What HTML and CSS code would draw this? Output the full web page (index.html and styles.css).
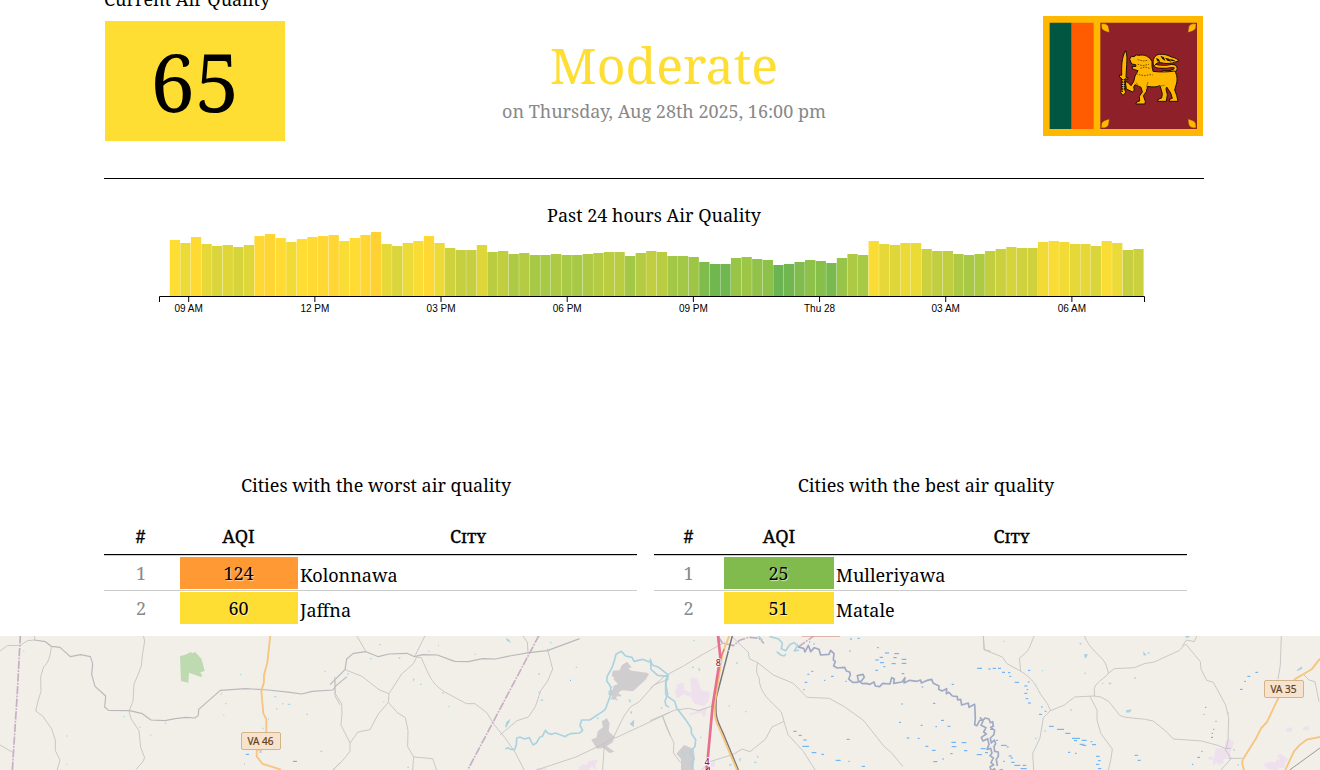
FILE: index.html
```html
<!DOCTYPE html>
<html lang="en">
<head>
<meta charset="utf-8">
<title>Air Quality</title>
<link rel="stylesheet" href="styles.css">
</head>
<body>
<main class="page">
  <section class="current">
    <div class="current-left">
      <div class="current-label">Current Air Quality</div>
      <div class="aqi-box">65</div>
    </div>
    <div class="current-status">
      <div class="level">Moderate</div>
      <div class="date">on Thursday, Aug 28th 2025, 16:00 pm</div>
    </div>
    <svg class="flag" viewBox="39 33 480 360" preserveAspectRatio="none">
      <path fill="#ffb700" d="M39 33h480v360H39z"/>
      <path fill="#005641" d="M59 53h66v319H59z"/>
      <path fill="#ff5b00" d="M125 53h66v319h-66z"/>
      <path fill="#8d2029" d="M211 53h290v319H211z"/>
      <g fill="#ffb700" stroke="#8a4a18" stroke-width="1">
        <path d="M214 57c14-2 22 4 22 13l2 12c-12-2-23-7-23-15z"/>
        <path d="M498 57c-14-2-22 4-22 13l-2 12c12-2 23-7 23-15z"/>
        <path d="M214 368c14 2 22-4 22-13l2-12c-12 2-23 7-23 15z"/>
        <path d="M498 368c-14 2-22-4-22-13l-2-12c12 2 23 7 23 15z"/>
      </g>
      <g fill="none" stroke-linecap="round">
        <path stroke="#211006" stroke-width="11" d="M400 201c18 2 34-2 37-9 1-8-5-10-13-9-18 3-38 5-50-2"/>
        <path stroke="#ffb700" stroke-width="6" d="M400 201c18 2 34-2 37-9 1-8-5-10-13-9-18 3-38 5-50-2"/>
      </g>
      <g fill="#ffb700" stroke="#211006" stroke-width="3" stroke-linejoin="round">
        <path d="M370 180c-3-16 3-30 18-32 16-2 28 4 39 9 10 1 16 7 20 10-8 1-12 6-20 7-14 3-25 1-35-1-9-1-14 2-18 9z"/>
        <path d="M299 163l5-9 8 1 7-5c9 3 16-2 24 1 8 1 12 7 17 9l6 10v14l3 15c22 3 47 2 65-1 8 12 8 24 6 36l-6 21 6 16 4 18h-27l3-7 7-2-5-16-12-18-2 6 4 17-3 20h-27l4-7 9-3 2-13-7-24c-11 4-22 5-37 2l-4 16-9 12 6 17-1 8h-28l3-6 9-3-1-14 9-13-4-14-18-8-4 7 2 9-5 6-19-9-3-23 9 4 8 9 8-12 4-17 9-16-16-5-2-7 12-1-1-5-12-2z"/>
        <path d="M287 137c5 12 4 27 3 42l-2 38 6 1-1 5-8-2v35l2 6-8 10-7-10 2-7v-36l-6-3 1-6 6 1c0-28-1-52 12-74z"/>
      </g>
      <path fill="#211006" d="M378 159l8 3 5 9-9-2zM391 152l11 5 4 11-9-6zM405 158l12 3 8 9-13-3zM419 161l13 4 5 4-12-1z"/>
      <path fill="none" stroke="#79520f" stroke-width="3" stroke-dasharray="5 3" d="M323 164l16 4 16-2M323 178l14 4 20-4M331 190l14-4 17 5M319 206l12 4 14 2 14-3 9 1"/>
      <path fill="none" stroke="#211006" stroke-width="4" stroke-dasharray="4 3" d="M277 222v40M283 222v34"/>
      <path fill="none" stroke="#725014" stroke-width="2" d="M354 231l-5 16M319 233l8 15M386 244l18-3"/>
    </svg>
  </section>

  <section class="history">
    <h2 class="title">Past 24 hours Air Quality</h2>
    <svg class="chart" viewBox="0 0 1100 90">
      <g id="bars"></g>
      <path class="axis" d="M55.5 72V66.5H1040.5V72"/>
      <g id="ticks"></g>
    </svg>
  </section>

  <section class="rankings">
    <div class="ranking worst">
      <h2 class="title">Cities with the worst air quality</h2>
      <div class="row head"><span>#</span><span>AQI</span><span>City</span></div>
      <div class="row"><span class="rank">1</span><span class="value unhealthy">124</span><span class="city">Kolonnawa</span></div>
      <div class="row"><span class="rank">2</span><span class="value moderate">60</span><span class="city">Jaffna</span></div>
    </div>
    <div class="ranking best">
      <h2 class="title">Cities with the best air quality</h2>
      <div class="row head"><span>#</span><span>AQI</span><span>City</span></div>
      <div class="row"><span class="rank">1</span><span class="value good">25</span><span class="city">Mulleriyawa</span></div>
      <div class="row"><span class="rank">2</span><span class="value moderate">51</span><span class="city">Matale</span></div>
    </div>
  </section>
</main>

<svg class="map" viewBox="0 0 1320 134">
  <!-- west -->
  <g transform="translate(0 -6) scale(.33333)">
    <path class="wood" d="M540 79l20-6 12-7 5 4 9-4 19 22 9 35-13 4 6 12-4 2-36-13-2 30-22-5z"/>
    <path class="road strong" d="M103 30l33 5 18 14 26 3 31 28 31-6 29 6 7 21-3 32 10 36 32 29-3 33 12 10 63 1 38 9 26 19 42 2 31-6 32-4 27 2 10-8 1-18 65-57 76-5 68 4 66 7 34 5 32-8 61-4 11-14 32-26"/>
    <path class="road" d="M0 63l22-16 39-1 22-14 22-2-2-14M154 49c-3 30-8 48-23 62l-9 29 1 44-9 29-7 30 21 15 27 39 11 33v32l14 28-12 43M430 17l4 16-7 43-3 32-12 31-10 23-3 52-12 29 6 23 24 36 5 50 12 31-6 13-20 22M0 345l38 22M1005 150v48l15 27M1000 420l20-22"/>
    <path class="border" d="M61 16l-9 170-15 234"/>
    <path class="main" d="M811 16l-9 82-10 37v21l-8 27 6 67 9 18v75l-29 20v16l18 23 55 17"/>
    <path class="pond" d="M70 64h3M199 318h3M371 260h4M418 292h4M451 315h3M495 280h4M662 192h4M675 221h4M670 256h3M720 134h4M973 124h4M823 200h6M846 221h4M863 223h8M828 237h4M919 253h5M804 267h3M787 295h4M961 364h6M200 403h3M732 402h3"/>
    <path class="ditch" d="M737 373h10M879 394h12"/>
    <path class="town" d="M779 360h6v9h-8z"/>
  </g>
  <!-- centre -->
  <g transform="translate(330 -6) scale(.33333)">
    <path class="town" d="M848 122l21-1 6-15 16-11 14 17-10 4 10 6 45 6 7 4-10 17-7 6-31 29-30-3-8 2-6 8 10 4-5 5-8-3-5 12-16-1 6-10-12-4 1-12 12-3 3-12 13-5-14-14 3-6-8-3zM784 329l16-7 3-18 16-12-4-18 16-9 8 15-3 24 18 18-6 15-18 12 24 16-16 4-17-15-20 2z"/>
    <path class="estate" d="M620 414h30v6h-33zM747 410l14-8 6 4 8-12 8-2 22-3-10 18 5 10-9-1-5-9-9 13h-30z"/>
    <path class="road strong" d="M0 164l45-45 5-32 20-17 38-5 37 15 32-8 54-2 23 10 24-6 44 1 52 19 41 1 43-9 39 1 36-8 65-11 54-6 97-36"/>
    <path class="road" d="M80 17l28 48M285 17l-31 63M578 17l14 20 2 30M45 119l51 20 51 40 30 12 38-59 35-31 10-20 14 2c27 65 36 82 74 105l61 33h26l35 27 24 38 30 36 32 46 28 55M652 56l16 61-15 36-21 29-16 48-21 31-34 11-51 43M177 191l-2 26-30 35-25 47-36 7-24 33-27-54 3-34-1-29-19-31-2-51M60 339v25l-24 30-28 26M175 217l27 31 24 15 8 38-1 49 18 31 57 5 12 35M251 381l-3 39M620 420l118-39 88-42 25-18 30-61 21-30 26-15 44-50 45-18M851 321l5 3 114-53 50-24M998 258l24 61M823 343l-5 77"/>
    <path class="border" d="M627 16L413 420"/>
    <path class="river" d="M526 357l8-4 8 5h12l5-13 1-20 10-4 13 6 15-4 11 22 10-6 10-17 8-3 9-18 8 9 9 3 13-4 30 11 6-5 10-4 27-2 9-8-8-15 5-16h24l35-23 12-9 16-44v-24l-12-18 2-14 14-25 8-24 4-16 16-9 13 14 19 4 6 12 26-6 18 7 6-2 1 25 20 18 31 3-7 23 6 30-8 22 3 12 9 6"/>
    <path class="pondfill" d="M527 24l11 5 5 10-12-7zM525 292l4-16 12-10-3 11-9 15zM249 145l5 2-4 9zM895 207l8 4-3 9zM899 245l8-1-2 9zM899 282l14-14-2 24zM628 211l10-3 1 5z"/>
    <path class="pond" d="M147 44h5M120 86h5M206 84h5M295 64h4M324 46h3M434 73h4M660 38h5M625 187h5M270 163h5M336 189h5M355 230h4M160 215h3M625 132h5M737 112h4M52 132h5M992 233h4M840 171h7M858 209h5M800 265h6M232 412h5"/>
    <path class="ditch" d="M720 151h3"/>
  </g>
  <!-- motorway corridor -->
  <g transform="translate(650 -6) scale(.33333)">
    <path class="town" d="M79 371l23-26 29 12 3 23-4 40H93v-33z"/>
    <path class="estate" d="M82 161l20-3 1 21 22 9-5-42 20-2 8 17 5 18 10 4 16 4v14l-8 17-8 11-14-3-15-5-11-20-23-8-19 13-6-17zM118 250l20-4 8-8 24-6-2 25-8 4-6-12-17 2-17 6z"/>
    <path class="road" d="M0 176l46-39 58-31 51-31 67-37M0 272l73-31 42-6 32 7 38-14M37 258l14 38 21 43-2 30 22 29M247 21l23 22 25 24 3 19 25 12 47 37 60 25 41 42 67 3 45 25 56 40 26 32 37 47 23 20 34 41M323 98c-6 24-3 35 4 44 1 49 35 71 67 104l8 28 12 40 46 50 38 60M402 274l-36 17-20 37-46 37-24-8-26 16-67 21-28 25M1000 16l3 43 20 5"/>
    <path class="river" d="M0 86l7 19 19 7 24 19 5 5-8 14v43l10 9 17 12 6 20 27 35 17 26v15l13 19-2 20-16 20 13 17-7 16 4 18"/>
    <path class="river" d="M358 19l28 8 11 13-3 16 13 6 12-18 13-6 11 8-10 17 14-3M380 65l12 10 10 3 6-6M325 18l12 13"/>
    <path class="border" d="M204 18l13 21 33 8 19-16 27-9 31 3 15 15M445 51l26-19 24-16"/>
    <path class="canal" d="M444 51l17 4 4 11 10-20 7 19 11-12 14 5 5 17 25-2 5-12 10 10-2 19 6 4-5 14 11 6 22-2 5 11 10 3 2 9-5 12 12 10h12l14-4 9-11-4-9-17 4 3 15 12 9 12-1 11 3 12-7 4 12 13 2 9-10 22 2 5-19 8 4-2 13 25-4 9-13-3 16 17-8 22 3 11-4 2 9 15-7 16-4 5 12 17 8-1 10 10 5 14-7-1 15 8-4 10 11 15 2 1 10 9-2 3 17 20-6 2 13 17-9 2 41-2 20 7 3 8-16 10-1 7-6 11 3 4 11 7-3 2 14-8 3 12 9-3 14-10 9 3 15 9-9 4 11-5 8 2 15 11 2v13l-6 9 3 20"/>
    <path class="rail" d="M247 17l-48 185c-4 54-1 65 21 109l45 109"/>
    <path class="main" d="M238 17l-20 51-23 150c-4 33 1 56 13 77l53 125"/>
    <path class="motorway" d="M204 16l7 66-23 145-18 193"/>
    <path class="motorway thin" d="M211 84l12-26"/>
    <path class="bridge" d="M455 18h115"/>
    <path class="pond" d="M130 32h4M126 112h6M235 60v4M258 99h5M34 234h3M236 228h4M285 245h4M150 322h4M270 384v10M237 405h8M312 397h8M323 377v7M146 114l3 8M97 363l8 18"/>
    <path class="ditch" d="M477 36h4M490 42h4M600 27h6M623 25h6M598 63h4M681 53h5M676 90h10M689 82h10M705 69h12M733 71h14M690 98h12M730 83h10M755 88h14M725 101h12M700 110h6M676 121h8M484 124h6M472 133h6M464 157h8M543 139h8M522 151h4M460 179h4M586 154h4M755 100h14M755 131h8M815 171h5M981 115h13M905 163h7M754 222h5M849 220h7M747 277h6M873 271h9M812 286h6M856 290h5M893 289h8M430 304h10M446 316h9M460 330h10M457 349h20M485 368h14M514 373h8M590 328h9M557 391h15M595 394h4M635 409h10M770 324h8M803 325h6M826 349h9M846 361h11M904 337h14M935 338h14M905 350h14M942 362h10M901 371h7M850 395h12M877 387h5M980 374h10"/>
    <path class="estate" d="M180 400l15-8v18h-12z"/>
    <text class="ref" x="205" y="107">8</text>
    <text class="ref" x="171" y="404">4</text>
    <path class="ref-mark" d="M178 420v-8l-10 8"/>
  </g>
  <!-- east -->
  <g transform="translate(980 -6) scale(.33333)">
    <path class="estate" d="M680 386l16-8 4 11 8-34 25-1 4-22 12-8 4 8 9 2-3 14-6 12-3 21-20 8 2 10-15 6-5-8-14 11 2-18zM918 296l16-5 5 9-8 6-13-3zM969 292l16-4 2 12-19 1zM850 401l20-6 17 2 2-9 12 2-10-12 10-6 14 8 9 8-8 10-3 16-18 1-7 12-8-8-18-2z"/>
    <path class="road" d="M10 16l2 43 55 22 14 20 42 23c39 26 42 39 59 69l20 28 10 21 41-17 31-24 59-3 20 3 24 14 33 42 18 5 58 6 23 5 38 30 23 24 85 6 48 13 23 9h16M163 17c-17 37-11 43-45 67l4 40M313 17c13 38 47 57 63 82l10 30 17-13 60-3 30-12 30-5 43-20 31-14 20-20 44 53 2 22 17 34 20 6 37 68 9 38-2 69-4 18-3 11 6 8 10 17-32 36M745 385h43M386 129c-10 16-37 25-43 46v25M331 201l20 39v31l12 40 34 46-4 29-8 34M212 241l-22 22-10 61-22 46 3 50M607 48l12-18 24 5 8-19M904 17l-3 88-7 43M970 133l17 17 18 5 12 60"/>
    <path class="canal" d="M0 262l9 11-6 13 15 7-7 13 8 6-15 10 5 11 14-7 4 17-6 15 11-3 4 15-6 7 10 7-7 14 8 7-11 5 4 13 9-7 5 9 18-6 5 9-8 10-10-6 5 13"/>
    <path class="main" d="M1020 86l-25 32-20 12-28 16-53 60-33 70-17 18-17 33-38 61c-7 13 1 20 3 32"/>
    <path class="main" d="M1020 321l-40 8-20 15-18 20-26 56"/>
    <path class="rail thin" d="M929 420l91-66"/>
    <path class="pondfill" d="M314 71l10 2-7 13-5-8zM297 38l8 1-2 6zM489 63l11 12-9 2zM385 158h11l-7 6zM438 241l17-3-5 9-11 1zM615 17h14l-2 6h-9zM950 121l15-12 2 7-14 7z"/>
    <path class="pond" d="M503 69h6M313 130h5M366 160h4M463 144h5M271 240h5M165 325h5M193 303h5M759 360h5M773 405h4M71 34h3M186 122h3M744 250h3"/>
    <path class="ditch" d="M0 115h5M25 117h7M38 115h10M54 115h9M66 127h9M88 139h6M84 128h7M104 157h13M144 121h7M143 156h6M133 168h9M140 179h5M133 190h9M137 206h8M144 219h9M183 231h5M194 244h5M177 253h9M207 289h14M231 298h21M256 310h15M276 325h24M282 332h9M305 331h15M299 343h12M307 346h12M332 335h5M336 344h12M264 367h7M285 370h5M348 379h11M354 392h8M348 403h10M354 416h10M469 376h5M473 391h9M464 376h5M636 403h4M652 382h8M664 364h4M693 322h6M695 310h4M699 298h4M706 274h4M670 253h3M675 232h4M780 178h8M793 154h5M802 139h9M826 127h8M30 298h10M48 331h6M63 346h17M80 351h6M2 356h15M15 368h9M86 378h9M92 384h7M70 394h5M94 397h10M103 406h18M128 406h11M122 416h18M0 374h6"/>
  </g>
  <g class="shield">
    <rect x="241.500" y="96.500" width="39" height="17" rx="1.500"/>
    <text x="260.500" y="109">VA 46</text>
    <rect x="1264.500" y="44.500" width="39" height="17" rx="1.500"/>
    <text x="1283.500" y="57">VA 35</text>
  </g>
</svg>
<script src="chart.js"></script>
</body>
</html>
```
FILE: styles.css
```css
body {
  margin: 0;
  height: 770px;
  overflow: hidden;
  background: #fff;
  color: #000;
  font: 18px/24px "Noto Serif", "Droid Serif", serif;
}

.page {
  width: 1100px;
  height: 636px;
  margin-left: 104px;
  overflow: hidden;
}

.current {
  display: flex;
  justify-content: space-between;
  height: 178px;
  border-bottom: 1px solid #000;
}

.current-left { width: 181px; }

.current-label {
  height: 21px;
  margin-top: -13px;
  margin-bottom: 13px;
  white-space: nowrap;
}

.aqi-box {
  width: 180px;
  height: 120px;
  margin-left: 1px;
  background: #ffde33;
  font-size: 80px;
  line-height: 120px;
  text-align: center;
}

.current-status {
  padding-top: 35px;
  text-align: center;
}

.level {
  color: #ffde33;
  font-size: 50px;
  line-height: 60px;
}

.date { color: #888; margin-top: 4px; }

.flag {
  width: 160px;
  height: 120px;
  margin: 16px 1px 0 0;
}

.title {
  margin: 0;
  font-size: 18px;
  font-weight: 400;
  line-height: 24px;
  text-align: center;
}

.history { box-sizing: border-box; height: 294px; padding-top: 24px; }

.chart { display: block; width: 1100px; height: 90px; margin-top: 3px; }

.axis { fill: none; stroke: #000; }

.tick {
  font: 10px "Liberation Sans", Arial, sans-serif;
  text-anchor: middle;
}

.rankings { display: flex; gap: 17px; }

.ranking { width: 533px; }

.ranking .title { width: 544px; margin-bottom: 20px; }

.row {
  display: grid;
  column-gap: 2px;
  box-sizing: border-box;
  height: 35px;
  padding: 2px 0 0;
  border-bottom: 1px solid #ccc;
  text-align: center;
}

.worst .row { grid-template-columns: 74px 118px 337px; }

.best .row { grid-template-columns: 68px 110px 351px; }

.head {
  height: 38px;
  padding-top: 7px;
  border-bottom: 1px solid #000;
  box-shadow: 0 1px #ccc;
  font-variant: small-caps;
  -webkit-text-stroke: .35px #000;
}

.worst .head span { margin-left: -1px; }

.head + .row { height: 36px; }

.row:last-child { border-bottom: 0; padding-top: 1px; }

.rank { color: #888; line-height: 32px; }

.best .rank, .best .head span:first-child { padding-left: 1px; }

.value {
  box-sizing: border-box;
  height: 32px;
  line-height: 32px;
  padding-right: 1px;
  text-shadow: 1px 1px 1px rgba(255, 255, 255, .6);
}

.unhealthy { background: #ff9933; }
.moderate { background: #ffde33; }
.good { background: #81bb4e; }

.city { line-height: 36px; text-align: left; }

.map {
  display: block;
  width: 1320px;
  height: 134px;
  background: #f2efe9;
}

.map path { stroke-linejoin: round; }

.road, .border, .main, .river, .canal, .rail, .motorway, .bridge, .pond, .ditch, .ref-mark { fill: none; }

.road { stroke: #c3c2c2; stroke-width: 2.6; }
.road.strong { stroke: #b9b9bb; stroke-width: 3.5; }
.main { stroke: #f7c57f; stroke-width: 5.5; }
.motorway { stroke: #e66f8b; stroke-width: 8; }
.motorway.thin { stroke-width: 4; }
.rail { stroke: #777; stroke-width: 4.5; }
.rail.thin { stroke: #999; stroke-width: 3; }
.bridge { stroke: #dda38f; stroke-width: 5; }
.border { stroke: #c6aec4; stroke-width: 5; stroke-dasharray: 25 4 5 4; }
.river { stroke: #aad3df; stroke-width: 5; }
.canal { stroke: #a0aac4; stroke-width: 5; }
.pond { stroke: #aad8e6; stroke-width: 4; }
.pondfill { fill: #aad3df; }
.ditch { stroke: #58aaf7; stroke-width: 3; }
.town { fill: #d0cdcf; }
.estate { fill: #eee0ed; }
.wood { fill: #bddab1; }

.ref {
  fill: #95212d;
  stroke: #fff;
  stroke-width: 5px;
  paint-order: stroke;
  font: 500 27px "Noto Sans", sans-serif;
  text-anchor: middle;
}

.ref-mark { stroke: #95212d; stroke-width: 3; }

.shield rect { fill: #f7e3cd; stroke: #d3b58b; }

.shield text {
  fill: #60401a;
  font: 10px "Noto Sans", sans-serif;
  text-anchor: middle;
  stroke: #60401a;
  stroke-width: .2px;
}
```
FILE: chart.js
```js
// Bar heights in pixels, one reading every quarter of an hour.
const heights = [
  56, 53, 59, 52, 50, 51, 49, 51, 60, 62, 58, 54, 57, 59, 60, 61, 55, 58, 61, 64, 52, 50, 53,
  55, 60, 53, 48, 46, 46, 51, 44, 45, 42, 43, 41, 41, 42, 41, 41, 42, 43, 44, 44, 40, 43, 45,
  44, 40, 40, 39, 34, 32, 32, 38, 39, 37, 36, 31, 32, 34, 36, 35, 33, 38, 42, 41, 55, 52, 51,
  53, 53, 47, 45, 45, 42, 41, 42, 45, 47, 49, 48, 48, 54, 55, 54, 52, 52, 50, 55, 53, 46, 47
];
const labels = ["09 AM", "12 PM", "03 PM", "06 PM", "09 PM", "Thu 28", "03 AM", "06 AM"];
const stops = [
  [31, [106, 180, 81]], [35, [135, 191, 75]], [41, [168, 201, 69]], [46, [198, 207, 63]],
  [51, [223, 215, 57]], [56, [255, 222, 51]], [60, [255, 216, 51]], [64, [255, 209, 51]]
];

function color(h) {
  const i = Math.max(1, stops.findIndex(s => s[0] >= h));
  const [h0, a] = stops[i - 1], [h1, b] = stops[i];
  return `rgb(${a.map((c, k) => Math.round(c + (b[k] - c) * (h - h0) / (h1 - h0))).join(",")})`;
}

document.getElementById("bars").innerHTML = heights.map((h, i) =>
  `<rect x="${(65.7 + i * 10.589).toFixed(2)}" y="${66 - h}" width="10.3" height="${h}" fill="${color(h)}"/>`
).join("");

document.getElementById("ticks").innerHTML = labels.map((t, i) => {
  const x = (84.7 + i * 126.17).toFixed(2);
  return `<path class="axis" d="M${x} 67v5"/><text class="tick" x="${x}" y="82">${t}</text>`;
}).join("");
```
